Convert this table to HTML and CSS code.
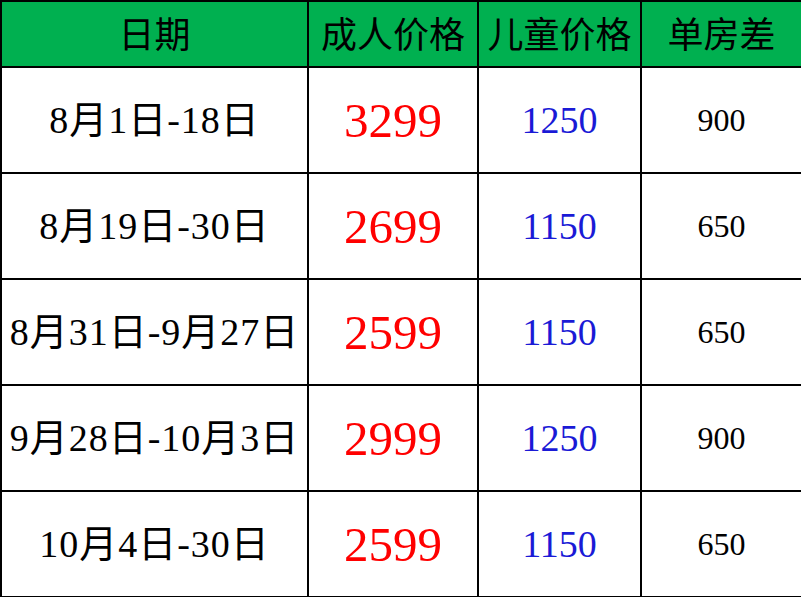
FILE: index.html
```html
<!DOCTYPE html>
<html lang="zh-CN">
<head>
<meta charset="utf-8">
<title>价格表</title>
<link rel="stylesheet" href="styles.css">
</head>
<body>
<table class="price-table">
  <colgroup>
    <col class="col-date">
    <col class="col-adult">
    <col class="col-child">
    <col class="col-single">
  </colgroup>
  <thead>
    <tr class="head-row">
      <th class="h-date">日期</th>
      <th class="h-adult">成人价格</th>
      <th class="h-child">儿童价格</th>
      <th class="h-single">单房差</th>
    </tr>
  </thead>
  <tbody>
    <tr>
      <td class="date">8月1日-18日</td>
      <td class="adult">3299</td>
      <td class="child">1250</td>
      <td class="single">900</td>
    </tr>
    <tr>
      <td class="date">8月19日-30日</td>
      <td class="adult">2699</td>
      <td class="child">1150</td>
      <td class="single">650</td>
    </tr>
    <tr>
      <td class="date">8月31日-9月27日</td>
      <td class="adult">2599</td>
      <td class="child">1150</td>
      <td class="single">650</td>
    </tr>
    <tr>
      <td class="date">9月28日-10月3日</td>
      <td class="adult">2999</td>
      <td class="child">1250</td>
      <td class="single">900</td>
    </tr>
    <tr>
      <td class="date">10月4日-30日</td>
      <td class="adult">2599</td>
      <td class="child">1150</td>
      <td class="single">650</td>
    </tr>
  </tbody>
</table>
</body>
</html>
```

FILE: styles.css
```css
html, body {
  margin: 0;
  padding: 0;
  background: #ffffff;
}

.price-table {
  width: 801px;
  height: 597px;
  border-collapse: collapse;
  table-layout: fixed;
  font-family: "Liberation Serif", "Noto Sans CJK SC", serif;
  color: #000000;
}

.col-date { width: 307px; }
.col-adult { width: 170px; }
.col-child { width: 163px; }
.col-single { width: 161px; }

.price-table th,
.price-table td {
  border: 2px solid #000000;
  text-align: center;
  vertical-align: middle;
  padding: 0;
  line-height: 1;
}

.head-row {
  height: 66px;
  background: #00b050;
}

.price-table th {
  font-weight: 400;
  font-size: 36px;
  padding-top: 4px;
}

.h-date { font-size: 35px; }
.h-single { font-size: 30px; }

.price-table tbody tr {
  height: 106px;
}

.date {
  font-size: 38px;
  letter-spacing: 1px;
  padding-top: 2px;
}

.adult {
  font-size: 49px;
  color: #ff0000;
  padding-top: 4px;
}

.child {
  font-size: 38px;
  color: #1a1ad6;
  padding-top: 2px;
}

.single {
  font-size: 32px;
  padding-top: 2px;
}
```
